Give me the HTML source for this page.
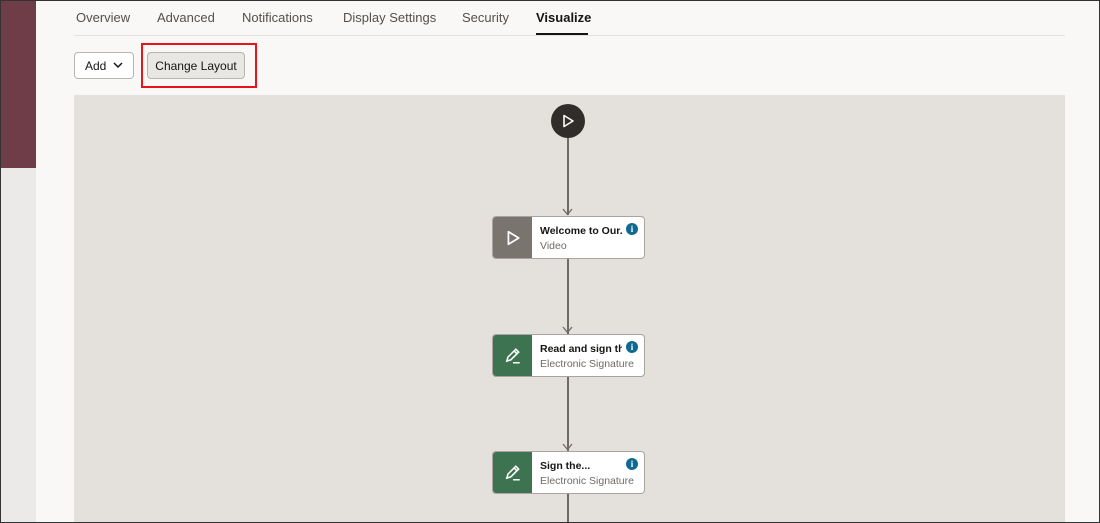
<!DOCTYPE html>
<html><head><style>
*{box-sizing:border-box;margin:0;padding:0}
body{width:1100px;height:523px;overflow:hidden;background:#f9f8f6;font-family:"Liberation Sans",sans-serif;position:relative}
.frame{position:absolute;left:0;top:0;width:1100px;height:523px;border:1px solid #333;z-index:10;pointer-events:none}
.strip{position:absolute;left:0;top:0;width:36px;height:523px;background:#ebeae8}
.strip .top{height:168px;background:#6e3d47}
.tab{position:absolute;top:10px;font-size:13px;color:#55504c}
.sep{position:absolute;left:74px;right:35px;top:35px;height:1px;background:#e4e1dc}
.btn{position:absolute;top:52px;height:27px;border:1px solid #b9b5b0;border-radius:4px;font-size:12px;color:#161513;display:flex;align-items:center;justify-content:center}
.canvas{position:absolute;left:74px;top:95px;width:991px;height:428px;background:#e4e1dc}
.line{position:absolute;left:567px;width:1.5px;background:#6f6a66}
.arrow{position:absolute;left:562px;width:11px;height:8px}
.card{position:absolute;left:492px;width:153px;height:43px;background:#fff;border:1px solid #a9a49f;border-radius:4px;overflow:hidden}
.card .ic{position:absolute;left:0;top:0;width:39px;height:100%;display:flex;align-items:center;justify-content:center}
.card .t{position:absolute;left:47px;top:8px;font-size:10.5px;font-weight:bold;color:#161513;white-space:nowrap;width:82px;overflow:hidden}
.card .s{position:absolute;left:47px;top:23px;font-size:10.5px;color:#6f6a66}
.info{position:absolute;left:133px;top:6px;width:12px;height:12px;border-radius:50%;background:#0f6a8f;color:#fff;font-size:9px;font-weight:bold;text-align:center;line-height:12px;font-family:"Liberation Serif",serif}
</style></head><body>
<div class="frame"></div>
<div class="strip"><div class="top"></div></div>
<div class="tab" style="left:76px">Overview</div>
<div class="tab" style="left:157px">Advanced</div>
<div class="tab" style="left:242px">Notifications</div>
<div class="tab" style="left:343px">Display Settings</div>
<div class="tab" style="left:462px">Security</div>
<div class="tab" style="left:536px;color:#161513;font-weight:bold">Visualize</div>
<div class="sep"></div>
<div style="position:absolute;left:536px;top:33px;width:52px;height:2px;background:#161513"></div>
<div class="btn" style="left:74px;width:60px;background:#fff">Add&nbsp;&nbsp;<svg width="10" height="7" viewBox="0 0 10 7"><path d="M1 1l4 4 4-4" fill="none" stroke="#161513" stroke-width="1.5"/></svg></div>
<div class="btn" style="left:147px;width:98px;background:#e9e7e4">Change Layout</div>
<div style="position:absolute;left:141px;top:43px;width:116px;height:45px;border:2px solid #e8141c"></div>
<div class="canvas"></div>
<div style="position:absolute;left:551px;top:104px;width:34px;height:34px;border-radius:50%;background:#312d2a;display:flex;align-items:center;justify-content:center"><svg width="14" height="14" viewBox="0 0 14 14"><path d="M3 1.5l9 5.5-9 5.5z" fill="none" stroke="#fff" stroke-width="1.6" stroke-linejoin="round"/></svg></div>
<div class="line" style="top:138px;height:77px"></div>
<svg class="arrow" style="top:208px" viewBox="0 0 11 8"><path d="M1 1l4.5 5.5L10 1" fill="none" stroke="#6f6a66" stroke-width="1.3"/></svg>
<div class="line" style="top:258px;height:76px"></div>
<svg class="arrow" style="top:326px" viewBox="0 0 11 8"><path d="M1 1l4.5 5.5L10 1" fill="none" stroke="#6f6a66" stroke-width="1.3"/></svg>
<div class="line" style="top:376px;height:75px"></div>
<svg class="arrow" style="top:443px" viewBox="0 0 11 8"><path d="M1 1l4.5 5.5L10 1" fill="none" stroke="#6f6a66" stroke-width="1.3"/></svg>
<div class="line" style="top:493px;height:30px"></div>
<div class="card" style="top:216px"><div class="ic" style="background:#7a746f"><svg width="16" height="16" viewBox="0 0 14 14"><path d="M3 1.5l9 5.5-9 5.5z" fill="none" stroke="#fff" stroke-width="1.5" stroke-linejoin="round"/></svg></div><div class="t">Welcome to Our..</div><div class="s">Video</div><div class="info">i</div></div>
<div class="card" style="top:334px"><div class="ic" style="background:#3e7351"><svg width="18" height="18" viewBox="0 0 16 16"><path d="M2.5 12.5l1-3.5 7-7 2.5 2.5-7 7zM9 3.5l2.5 2.5M8 14h6" fill="none" stroke="#fff" stroke-width="1.4"/></svg></div><div class="t">Read and sign the</div><div class="s">Electronic Signature</div><div class="info">i</div></div>
<div class="card" style="top:451px"><div class="ic" style="background:#3e7351"><svg width="18" height="18" viewBox="0 0 16 16"><path d="M2.5 12.5l1-3.5 7-7 2.5 2.5-7 7zM9 3.5l2.5 2.5M8 14h6" fill="none" stroke="#fff" stroke-width="1.4"/></svg></div><div class="t">Sign the...</div><div class="s">Electronic Signature</div><div class="info">i</div></div>
</body></html>
